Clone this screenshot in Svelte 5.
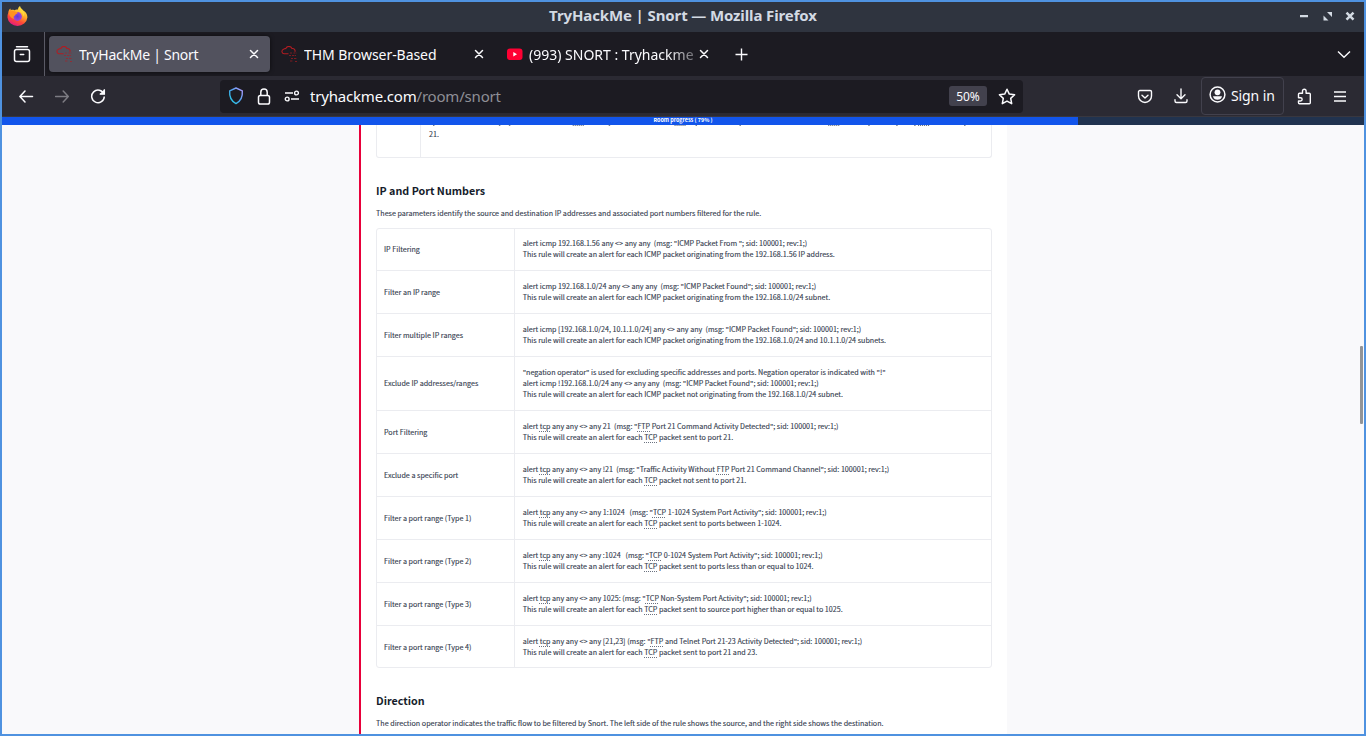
<script>
  const rows = [
    ['IP Filtering', ['alert icmp 192.168.1.56 any <> any any \u00a0(msg: "ICMP Packet From "; sid: 100001; rev:1;)', 'This rule will create an alert for each ICMP packet originating from the 192.168.1.56 IP address.']],
    ['Filter an IP range', ['alert icmp 192.168.1.0/24 any <> any any \u00a0(msg: "ICMP Packet Found"; sid: 100001; rev:1;)', 'This rule will create an alert for each ICMP packet originating from the 192.168.1.0/24 subnet.']],
    ['Filter multiple IP ranges', ['alert icmp [192.168.1.0/24, 10.1.1.0/24] any <> any any \u00a0(msg: "ICMP Packet Found"; sid: 100001; rev:1;)', 'This rule will create an alert for each ICMP packet originating from the 192.168.1.0/24 and 10.1.1.0/24 subnets.']],
    ['Exclude IP addresses/ranges', ['"negation operator" is used for excluding specific addresses and ports. Negation operator is indicated with "!"', 'alert icmp !192.168.1.0/24 any <> any any \u00a0(msg: "ICMP Packet Found"; sid: 100001; rev:1;)', 'This rule will create an alert for each ICMP packet not originating from the 192.168.1.0/24 subnet.']],
    ['Port Filtering', ['alert *tcp* any any <> any 21 \u00a0(msg: "*FTP* Port 21 Command Activity Detected"; sid: 100001; rev:1;)', 'This rule will create an alert for each *TCP* packet sent to port 21.']],
    ['Exclude a specific port', ['alert *tcp* any any <> any !21 \u00a0(msg: "Traffic Activity Without *FTP* Port 21 Command Channel"; sid: 100001; rev:1;)', 'This rule will create an alert for each *TCP* packet not sent to port 21.']],
    ['Filter a port range (Type 1)', ['alert *tcp* any any <> any 1:1024 \u00a0\u00a0(msg: "*TCP* 1-1024 System Port Activity"; sid: 100001; rev:1;)', 'This rule will create an alert for each *TCP* packet sent to ports between 1-1024.']],
    ['Filter a port range (Type 2)', ['alert *tcp* any any <> any :1024 \u00a0\u00a0(msg: "*TCP* 0-1024 System Port Activity"; sid: 100001; rev:1;)', 'This rule will create an alert for each *TCP* packet sent to ports less than or equal to 1024.']],
    ['Filter a port range (Type 3)', ['alert *tcp* any any <> any 1025: (msg: "*TCP* Non-System Port Activity"; sid: 100001; rev:1;)', 'This rule will create an alert for each *TCP* packet sent to source port higher than or equal to 1025.']],
    ['Filter a port range (Type 4)', ['alert *tcp* any any <> any [21,23] (msg: "*FTP* and Telnet Port 21-23 Activity Detected"; sid: 100001; rev:1;)', 'This rule will create an alert for each *TCP* packet sent to port 21 and 23.']]
  ];
  const tails = [433, 499, 509, 609, 696, 740, 869, 897, 915, 965];
  const glossary = [573, 675, 829, 919];
</script>

{#snippet cloud()}
  <svg class="fav" width="17" height="17" viewBox="0 0 17 17" fill="none" stroke="#b11c22" stroke-width="1.1">
    <path d="M7.500 7.800H3A2.300 2.300 0 0 1 2.600 3.300 2.300 2.300 0 0 1 4.800 2.600 3.300 3.300 0 0 1 11 2.600a2.300 2.300 0 0 1 2.800 3.200" />
    <path d="M9 7h2.500M12.500 7h3M8 9.500h2M11 9.500h4M10 12.500h2M13 12.500h3M9 15h3M14 15.500h2" stroke-opacity=".65" stroke-dasharray="2 .6" />
  </svg>
{/snippet}

{#snippet cross()}
  <svg class="cross" width="10" height="10" viewBox="0 0 10 10" stroke="#fbfbfe" stroke-width="1.500" stroke-linecap="round"><path d="M1.500 1.500l7 7M8.500 1.500l-7 7" /></svg>
{/snippet}

<div class="window">
  <header class="titlebar">
    <svg class="fox" width="21" height="21" viewBox="0 0 21 21">
      <defs>
        <linearGradient id="flame" x1=".8" y1="0" x2=".3" y2="1"><stop offset="0" stop-color="#fff44f" /><stop offset=".4" stop-color="#ffb02a" /><stop offset=".7" stop-color="#ff4a36" /><stop offset="1" stop-color="#e31587" /></linearGradient>
        <radialGradient id="globe"><stop offset="0" stop-color="#5b3fd6" /><stop offset="1" stop-color="#a044d8" /></radialGradient>
      </defs>
      <path d="M1.200 7C1.400 5 2.200 3.600 3.300 2.600l.5 1.600c1.200-.5 2.400-.4 3.500 0C8.500 3.500 10 3.300 11 3.600 11 2 11.800.8 13 0c.5 2.200 2.200 3.200 3.200 4.500l1.200.8c2 1.600 3 3.800 3 6.200A10 9.500 0 0 1 .5 11.500C.4 9.800.6 8.300 1.200 7z" fill="url(#flame)" />
      <circle cx="10.500" cy="10.500" r="4.400" fill="url(#globe)" />
      <path d="M2 7c2-2.500 5-2.500 7-1 1.500 0 2 .6 1.500 1.300-1 1-2.500 1-2.500 2.200-1.600.6-2 2.200-.6 3.500C4 12.500 2.500 10 2 7z" fill="#ff9320" />
      <path d="M11.500 5.500c2.600 0 5 2 4.700 5 2-2.500 1-5.500-1.200-7z" fill="#ffd83c" />
    </svg>
    <h1>TryHackMe | Snort — Mozilla Firefox</h1>
    <svg class="controls" width="56" height="12" viewBox="0 0 56 12" fill="#d3dae3">
      <path d="M0 4h8v2.200H0zM27 1h5v5zM23.500 4.500V9.500h5z" />
      <path d="M46.500 1.700l7 7M53.500 1.700l-7 7" stroke="#d3dae3" stroke-width="2.500" />
    </svg>
  </header>

  <nav class="tabs">
    <div class="recent">
      <svg width="18" height="18" viewBox="0 0 18 18" fill="none" stroke="#fbfbfe" stroke-width="1.500" stroke-linecap="round"><path d="M3.500 1.800h11M7.300 9.500h3.400" /><rect x="1.500" y="4.500" width="15" height="12" rx="2" /></svg>
    </div>
    <div class="tab active">{@render cloud()}<span class="t1">TryHackMe | Snort</span>{@render cross()}</div>
    <div class="tab">{@render cloud()}<span class="t2">THM Browser-Based</span>{@render cross()}</div>
    <div class="tab video">
      <svg class="fav" width="17" height="17" viewBox="0 0 17 17"><rect x="1" y="2.500" width="15.500" height="11.500" rx="3" fill="#f03" /><path d="M7.300 6v4.400l3.700-2.200z" fill="#fff" /></svg>
      <span class="t3">(993) SNORT : Tryhackme</span>{@render cross()}
    </div>
    <svg class="plus" width="13" height="13" viewBox="0 0 13 13" stroke="#fbfbfe" stroke-width="1.400"><path d="M6.500.5v12M.5 6.500h12" /></svg>
    <svg class="more" width="14" height="9" viewBox="0 0 14 9" fill="none" stroke="#fbfbfe" stroke-width="1.400"><path d="M1 1.500l6 5.700 6-5.700" /></svg>
  </nav>

  <div class="toolbar">
    <svg class="back" width="15" height="13" viewBox="0 0 15 13" fill="none" stroke="#fbfbfe" stroke-width="1.500" stroke-linecap="round" stroke-linejoin="round"><path d="M13.500 6.500H1M6 1L.9 6.500l5.100 5.500" /></svg>
    <svg class="forward" width="15" height="13" viewBox="0 0 15 13" fill="none" stroke="#7d7c83" stroke-width="1.500" stroke-linecap="round" stroke-linejoin="round"><path d="M.5 6.500h12.800M8.200 1l5.100 5.500-5.100 5.500" /></svg>
    <svg class="reload" width="16" height="16" viewBox="0 0 16 16" fill="none" stroke="#fbfbfe" stroke-width="1.500"><path d="M13.900 6.200A6.300 6.300 0 1 0 14.300 8.500M14.300 1.500V6H9.800" /><path d="M14.800 1v5.300H9.500z" fill="#fbfbfe" stroke="none" /></svg>
    <div class="address">
      <svg width="16" height="18" viewBox="0 0 16 18" fill="none" stroke="url(#shield)" stroke-width="1.400"><defs><linearGradient id="shield" x1="1" y1="0" x2="0" y2="1"><stop offset="0" stop-color="#b898ff" /><stop offset=".5" stop-color="#4ba3ef" /><stop offset="1" stop-color="#20d3e4" /></linearGradient></defs><path d="M8 1l6.300 2.800c.5 6-1.700 10.500-6.300 12.800C3.400 14.300 1.200 9.800 1.700 3.800z" stroke-linejoin="round" /></svg>
      <svg class="lock" width="14" height="17" viewBox="0 0 14 17" fill="none" stroke="#fbfbfe" stroke-width="1.500"><rect x="1.500" y="7.500" width="11" height="8.500" rx="1.800" /><path d="M3.800 7.500V4.200a3.200 3.200 0 0 1 6.400 0v3.300" /></svg>
      <svg class="perms" width="16" height="12" viewBox="0 0 16 12" fill="none" stroke="#fbfbfe" stroke-width="1.400"><path d="M1 3h8M7 9h8" /><circle cx="12.500" cy="3" r="1.900" /><circle cx="3.200" cy="9" r="1.900" /></svg>
      <span class="url">tryhackme.com<span>/room/snort</span></span>
      <span class="zoom">50%</span>
      <svg class="star" width="18" height="17" viewBox="0 0 18 17" fill="none" stroke="#fbfbfe" stroke-width="1.500" stroke-linejoin="round"><path d="M9 1.300l2.300 4.800 5.300.7-3.900 3.600 1 5.300L9 13.100l-4.700 2.600 1-5.300L1.400 6.800l5.300-.7z" /></svg>
    </div>
    <svg class="pocket" width="16" height="15" viewBox="0 0 16 15" fill="none" stroke="#fbfbfe" stroke-width="1.400" stroke-linecap="round" stroke-linejoin="round"><path d="M2.800 1.500h10.400c.7 0 1.300.6 1.300 1.300v4.200a6.500 6.500 0 0 1-13 0V2.800c0-.7.600-1.300 1.300-1.300z" /><path d="M5 6.300l3 2.800 3-2.800" /></svg>
    <svg class="download" width="14" height="16" viewBox="0 0 14 16" fill="none" stroke="#fbfbfe" stroke-width="1.400" stroke-linecap="round" stroke-linejoin="round"><path d="M7 1v9.500M3 6.700l4 4 4-4M1 11.800v1.200a1.500 1.500 0 0 0 1.500 1.500h9A1.500 1.500 0 0 0 13 13v-1.200" /></svg>
    <div class="signin">
      <svg width="17" height="17" viewBox="0 0 17 17"><circle cx="8.500" cy="8.500" r="7.400" fill="none" stroke="#fbfbfe" stroke-width="1.500" /><circle cx="8.500" cy="6.300" r="2.900" fill="#fbfbfe" /><path d="M4 10.300h9c-.4 2.400-2.200 3.500-4.500 3.500S4.400 12.700 4 10.300z" fill="#fbfbfe" /></svg>
      <span>Sign in</span>
    </div>
    <svg class="puzzle" width="15" height="17" viewBox="0 0 15 17" fill="none" stroke="#fbfbfe" stroke-width="1.400" stroke-linejoin="round"><path d="M1.500 8V6.300c0-.6.400-1 1-1h3V3a1.800 1.800 0 0 1 3.600 0v2.300h3.200c.6 0 1 .4 1 1v8.400c0 .6-.4 1-1 1H2.500c-.6 0-1-.4-1-1V13h2a1.600 1.600 0 0 0 0-3.300H1.500z" /></svg>
    <svg class="menu" width="12" height="11" viewBox="0 0 12 11" stroke="#fbfbfe" stroke-width="1.300"><path d="M0 1h12M0 5.500h12M0 10h12" /></svg>
  </div>

  <div class="progress"><div class="done" style:width="79%"></div><span>Room progress ( 79% )</span></div>

  <main>
    <article>
      <section class="previous">
        <div></div>
        <div class="tail">
          <svg width="570" height="2" viewBox="421 0 570 2">
            {#each tails as x}<rect {x} y="0" width="1.500" height=".8" fill="#5c6577" />{/each}
            {#each glossary as x}<path d="M{x} .5h12" stroke="#5c6577" stroke-dasharray="1 1" />{/each}
          </svg>
          <p>21.</p>
        </div>
      </section>
      <h2>IP and Port Numbers</h2>
      <p class="lead">These parameters identify the source and destination IP addresses and associated port numbers filtered for the rule.</p>
      <div class="table">
        {#each rows as [name, lines]}
          <div class="row">
            <div class="name">{name}</div>
            <div class="rule">
              {#each lines as line}
                <p>{#each line.split('*') as part, i}{#if i % 2}<abbr>{part}</abbr>{:else}{part}{/if}{/each}</p>
              {/each}
            </div>
          </div>
        {/each}
      </div>
      <h2>Direction</h2>
      <p class="lead">The direction operator indicates the traffic flow to be filtered by Snort. The left side of the rule shows the source, and the right side shows the destination.</p>
    </article>
    <div class="thumb"></div>
  </main>
</div>

<style>
  * { box-sizing: border-box; }
  h1, h2, p { margin: 0; }
  svg { display: block; flex: none; }
  .window { width: 1366px; height: 736px; border: 2px solid #4f92e0; display: flex; flex-direction: column; overflow: hidden; background: #f9f9fb; font-family: "Noto Sans", sans-serif; }
  .titlebar { height: 30px; flex: none; background: #2f343f; display: flex; align-items: center; position: relative; padding-left: 5px; }
  .fox { margin-top: -2px; }
  h1 { position: absolute; inset: 0; text-align: center; font-size: 15px; line-height: 27px; letter-spacing: -.12px; font-weight: 700; color: #d3dae3; white-space: nowrap; }
  .controls { margin-left: auto; margin-right: 8px; }

  .tabs { height: 44px; flex: none; background: #1c1b22; display: flex; align-items: center; color: #fbfbfe; font-size: 14px; }
  .recent { width: 43px; height: 44px; border-right: 1px solid #5b5b66; display: flex; align-items: center; padding-left: 11px; }
  .tab { width: 221px; height: 36px; margin-left: 4px; padding: 0 11px 0 7px; border-radius: 4px; display: flex; align-items: center; white-space: nowrap; }
  .tab.active { background: #52525e; box-shadow: 0 0 4px #0009; }
  .tab .fav { margin-right: 6px; }
  .tab span { flex: 1; overflow: hidden; }
  .tab .t1 { letter-spacing: -.25px; }
  .tab .t2 { letter-spacing: -.05px; }
  .tab.video span { mask-image: linear-gradient(90deg, #000 138px, #0005 166px); }
  .plus { margin-left: 15px; }
  .more { margin-left: auto; margin-right: 13px; }

  .toolbar { height: 41px; flex: none; background: #2b2a33; border-bottom: 1px solid #38373f; display: flex; align-items: center; padding-left: 17px; color: #fbfbfe; }
  .forward { margin-left: 21px; }
  .reload { margin-left: 20px; }
  .address { width: 803px; height: 33px; margin-left: 114px; background: #1c1b22; border-radius: 4px; display: flex; align-items: center; padding: 0 7px 0 8px; font-size: 15px; }
  .lock { margin-left: 13px; }
  .perms { margin-left: 13px; }
  .url { margin-left: 10px; flex: 1; white-space: nowrap; letter-spacing: -.19px; }
  .url span { color: #8f8f96; }
  .zoom { width: 38px; height: 20px; border-radius: 3px; background: #42414d; font-size: 12px; line-height: 21px; text-align: center; }
  .star { margin-left: 11px; }
  .pocket { margin-left: 114px; }
  .download { margin-left: 21px; }
  .signin { width: 83px; height: 38px; margin-left: 13px; border: 1px solid #42414d; border-radius: 4px; display: flex; align-items: center; padding-left: 7px; gap: 5px; font-size: 14px; letter-spacing: -.1px; white-space: nowrap; }
  .signin svg { margin-top: -3px; }
  .signin span { margin-top: -1px; }
  .puzzle { margin-left: 13px; }
  .menu { margin-left: 22px; }

  .progress { height: 8px; flex: none; background: #21334f; position: relative; }
  .done { height: 8px; background: #1255eb; }
  .progress span { position: absolute; inset: 0; text-align: center; color: #fff; font: 700 5.400px/7px "Noto Sans CJK SC", sans-serif; }

  main { flex: 1; min-height: 0; display: flex; justify-content: space-between; align-items: flex-start; padding-left: 357px; }
  article { width: 648px; height: 609px; background: #fff; border-left: 2px solid #e8003a; padding-left: 15px; color: #343c4e; font: 7.175px/11px "Noto Sans CJK SC", sans-serif; -webkit-text-stroke: .12px #343c4e; overflow: hidden; white-space: nowrap; }
  .previous { width: 616px; height: 33px; border: 1px solid #ebecf0; border-top: 0; border-radius: 0 0 3px 3px; display: grid; grid-template-columns: 43px 1fr; }
  .tail { border-left: 1px solid #ebecf0; }
  .tail svg { width: 569px; overflow: hidden; }
  .tail p { padding: 2px 0 0 8px; }
  h2 { margin-top: 24px; color: #151c2b; font-size: 10.720px; line-height: 18px; font-weight: 700; -webkit-text-stroke: 0; }
  .lead { margin-top: 8px; }
  .table { width: 616px; height: 440px; margin-top: 9px; border: 1px solid #ebecf0; border-radius: 3px; }
  .row { display: grid; grid-template-columns: 137px 1fr; border-top: 1px solid #ebecf0; }
  .row:first-child { border-top: 0; margin-top: -1px; }
  .row:last-child .rule { padding-bottom: 9px; }
  .row:last-child .name { padding-top: 1px; }
  .name { padding-left: 7px; display: flex; align-items: center; }
  .rule { border-left: 1px solid #ebecf0; padding: 10px 0 10px 7.700px; }
  abbr { text-decoration: underline dotted 1px #6b7280; text-underline-offset: 2px; }
  .thumb { width: 3px; height: 78px; margin: 221px 1px 0 0; background: #929497; border-radius: 1px; }
</style>
